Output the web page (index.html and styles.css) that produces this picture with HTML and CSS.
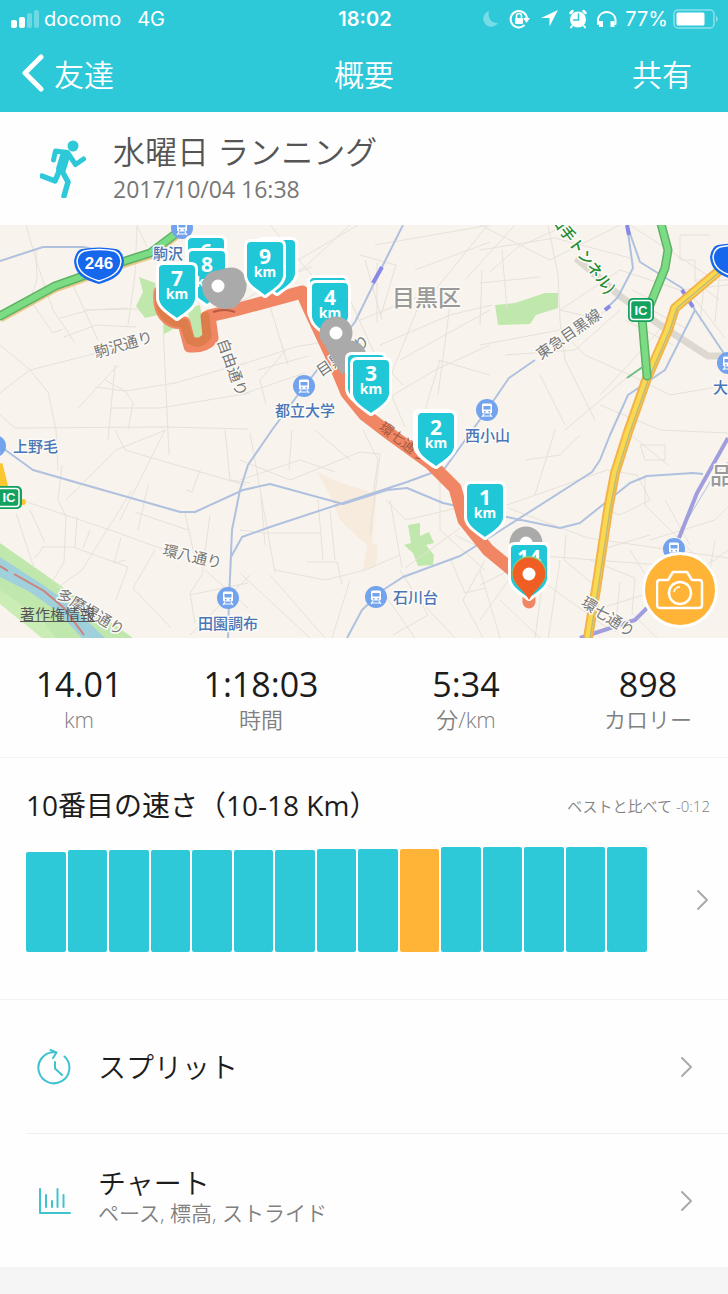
FILE: index.html
```html
<!DOCTYPE html>
<html lang="ja">
<head>
<meta charset="utf-8">
<meta name="viewport" content="width=device-width, initial-scale=1">
<title>概要</title>
<link rel="stylesheet" href="styles.css">
</head>
<body>
<header class="top">
  <div class="status">
    <div class="status-side">
      <svg class="signal" width="30" height="18" viewBox="0 0 30 18" fill="#fff"><rect x="1" y="10" width="6" height="8" rx="2"/><rect x="9" y="7" width="6" height="11" rx="2"/><rect x="17" y="3" width="5" height="15" rx="2" opacity=".3"/><rect x="24" y="0" width="5" height="18" rx="2" opacity=".3"/></svg>
      <span class="carrier">docomo</span>
      <span>4G</span>
    </div>
    <time class="clock">18:02</time>
    <div class="status-side status-right">
      <svg width="140" height="22" viewBox="480 7 140 22" fill="none" stroke="#fff" stroke-width="2" stroke-linecap="round">
        <path d="M488 10a8 8 0 1 0 9 12c-6 1-11-5-9-12z" fill="#fff" stroke="none" opacity=".35"/>
        <path d="M523 24.500a8.200 8.200 0 1 1 3-6.500"/><path d="M522 17h7l-3.500 5z" fill="#fff" stroke="none"/>
        <rect x="514" y="17" width="8" height="6" rx="1" fill="#fff" stroke="none"/><path d="M515.500 17v-2a2.500 2.500 0 0 1 5 0v2" stroke-width="1.500"/>
        <path d="M557 9l-17 8h8.500v8.500z" fill="#fff" stroke="none"/>
        <circle cx="577" cy="18.500" r="8" fill="#fff" stroke="none"/><path d="M569.500 12l2-2M582.500 10l2 2" stroke-width="2.500"/><path d="M571 25l-1 1.500M583 25l1 1.500"/><path d="M577.500 13v6h-5" stroke="#2dc9d9" stroke-width="1.500"/>
        <path d="M597 23v-5a9 9 0 0 1 17.500 0v5"/><path d="M600 20v6M611.500 20v6" stroke-width="4" stroke-linecap="butt"/>
      </svg>
      <span>77%</span>
      <svg width="48" height="20" viewBox="0 0 48 20"><rect x="2" y="1" width="40" height="18" rx="4" fill="none" stroke="#fff" stroke-width="1.500" opacity=".45"/><rect x="4.500" y="3.500" width="28" height="13" rx="1.500" fill="#fff"/><path d="M44 6.500q3.500 3.500 0 7z" fill="#fff" opacity=".45"/></svg>
    </div>
  </div>
  <nav class="nav">
    <button class="nav-button back" type="button"><svg width="24" height="38" viewBox="0 0 24 38" fill="none" stroke="#fff" stroke-width="5" stroke-linecap="round" stroke-linejoin="round"><path d="M21 3L5 19l16 16"/></svg>友達</button>
    <h1 class="nav-title">概要</h1>
    <button class="nav-button share" type="button">共有</button>
  </nav>
</header>

<main>
  <section class="activity">
    <svg width="46" height="58" viewBox="40 141 46 58" fill="none" stroke="#2dc9d9" stroke-linecap="round" stroke-linejoin="round"><circle cx="73" cy="147" r="5.500" fill="#2dc9d9" stroke="none"/><path d="M53.500 161l2-9 12 1.500 8 12 8-5.500" stroke-width="5"/><path d="M65 157l-4 13" stroke-width="10"/><path d="M60 170l-5 12-13-5M62 172l6 11-4 14" stroke-width="5.500"/></svg>
    <div>
      <h2 class="activity-name">水曜日 ランニング</h2>
      <p class="activity-date">2017/10/04 16:38</p>
    </div>
  </section>

  <section class="map" aria-label="コース">
    <svg class="map-canvas" viewBox="0 225 728 413">
      <defs>
        <path id="shield" d="M-14 -26H14Q18 -26 18 -22V8C17 16 8 21 0 27C-8 21 -17 16 -18 8V-22Q-18 -26 -14 -26Z"/>
        <g id="train"><circle r="11"/><path d="M-3.500 -6.500h7q1.500 0 1.500 1.500v7q0 1.500-1.500 1.500h-7q-1.500 0-1.500-1.500v-7q0-1.500 1.500-1.500z" fill="#fff"/><path d="M-3.500 -4h7v3.500h-7zM-3 1h1.500v1.500H-3zM1.500 1H3v1.500H1.500z"/><path d="M-3 4l-2 3M3 4l2 3M-4 6h8" stroke="#fff" stroke-width="1.200"/></g>
        <path id="drop" d="M0 26C-4 17 -16.500 10 -16.500 0A16.500 16.500 0 0 1 16.500 0C16.500 10 4 17 0 26Z"/>
      </defs>
      <rect y="225" width="728" height="413" fill="#f8f4ed"/>
      <g class="park">
        <path d="M139 277l16 6 3 32-13 3-9-12 7-14zM163 316l20 8-19 10zM187 308l13-3 5 32-12 4zM495 305l20-2 30-10h13v15l-22 7-6 9-32 1zM408 525l12-2v13l9-4 5 11-8 2 8 10-1 10-15 1-5-13-9-8 7-2zM0 543l50 35 83 60H0z"/>
      </g>
      <path d="M317 472l21 10 35 11 4-1-5 51 6 2-2 22-13 3 4-25-17-15-10-10-10-25z" fill="#f7ebdd"/>
      <path d="M0 590l40 27 16 21H0z" fill="#c9edb5"/><path d="M0 604l42 34H0z" fill="#f8f4ed"/>
      <path d="M0 557l40 26 27 19 38 36H82L58 612 30 592 0 577z" fill="#9fd0dc"/>
      <path d="M0 566l8 5M14 574l30 17 20 17 20 27" fill="none" stroke="#cf8179" stroke-width="2"/>
      <g class="road">
        <path d="M26 225l10 35 17 50 22 33M36 250l1 30-7 20 23 33 10-4M73 285l25 55M0 345l30 25 18 22 8 38 2 40M0 393l30-23 75-19 24-10M64 337l32-12 40 2M60 318l30-8 38-2M85 310l53-1M137 225l-2 50-7 50M115 365l-7 75M78 408l40-43M105 380l20 11 50-8 70-20M95 387l30 4 8 12-5 27M110 408h50l90-15M0 415l15 13 150-1 83 2M163 325l6 130M172 248l-2 60M137 225l10 22"/>
        <path d="M240 302l65-35 45-42M270 225l60 72M298 260l60-35M268 300l20 65M240 365l55-18 45-8M290 275l22-8M258 370l50-14M286 350l-26 30 6 25M240 395l65-22M350 300l25 55 28 30M365 260l17 60M360 255l36 10-15 50M377 263v60M360 320l75-30 57-70M380 345l70-30 42-10M400 360l90-50M385 400l50-30 55-25M375 245l115-20M415 270l75-28M417 310l-30 75 18 42M450 305l-12 90M438 360l52 15M482 270l-2 55M490 272l28-25 62-28M515 225l-50 55M440 360l-15 50"/>
        <path d="M480 250l75-12 75 20M480 283l60-6M502 250l5 60M548 225l10 50 2 45 5 40 30 60M480 225l70 35 80-40M560 310l60-40 60 20 48-5M560 310l35 8 14-10M505 355l70-5 45-40M540 375l25 50M480 345l80-15 25 25 45 20 40 20 58-10M600 395l30-32 40-45M565 430l65-55M600 405l60 25 68 3M680 235h30M680 235v25h15v20h33M632 290l25 12M633 300l52 28M625 320l48 25M690 293l35 45M694 280l25 20M705 277l-5 45M720 270l-5 52M630 225l85 55"/>
        <path d="M62 465l-4 35 8 17-2 45-12 20M66 500l50-50 50-20M16 513l18 55M27 502l83 28 50 18 25 3M30 510l15 33M77 517l-2 30M90 530l-7 18M42 547h30M35 558l8-11M73 547l55 20-12 33M121 538l-7 25 12-3M132 490l-50 80-25 18M165 430l-45 90M148 485l-10 45M65 480l122 33M135 512l53 18M200 470l-8 22-5-2M225 430l5 50 20 3M185 513l10 45M210 515l-8 60-12 18 5 30M155 550l-22 38 38 40M115 430l10 20 120 35M190 595l58-12M205 570l43 38M250 575l-60 60"/>
        <path d="M240 480l60-20 35 12M240 460l50 20 70-28 20 2-10 80M250 433l25 140M275 570l50 10 40-10 35-15M240 530l25 3h55M265 545l-4-50M318 500l5 60M330 510l5 50M307 562h30l5 22M270 575l55 63M240 573l70 65M363 430l15 30-5 35M292 430l-3 40M315 430l35 30M386 500l20 20 55-13 40 10M390 500l12 68M440 430v100l45 40M460 528l-55 40M350 580l-18 58M400 570l28 45-35 20M450 558l15 35 20-5M485 560l-22 40 20 38M385 595l30 43M410 590l45 48M455 535l60 30"/>
        <path d="M507 505l100-35 30 5 13 25-30 15-15-5M535 495l20-65M580 435l-20 20-35 5M640 445h25v15h-20zM625 430l43 35M508 508l80 30 140 20M566 535l-2 25 30 25M530 555l130 10M480 585l40-20 90 65M480 620l50-70M545 565l-10 73M560 560l-12 80M590 560l45 18-3 35 25 25M630 550l25 40 60-30 13-10M650 540l65-20 13-13M665 500l25 45M645 475v30l50 50M600 550l50-15M620 582l-5 50M595 610l80-25M480 570l20 68M715 540l-5 30M500 600l40 38"/>
      </g>
      <path d="M576 258l44 38 40 29 48 31h20" fill="none" stroke="#ddd8d0" stroke-width="7"/>
      <g class="rail">
        <path d="M0 261l43-14h40l40 8"/>
        <path d="M627 225l6 43-15 29-13 13M627 225l13 37 42 26 13 22 32 48M695 310l-30 60-37 25-18 40-10 25-8 12-105 67-27 17-57 21-20 13-21 20-15 28M535 360l-26 18-22 32-24 33-18 25-38 14-64 21-73 24-28 10-11 20-2 41M0 446l33 24 147 42h15l48-22 27-6 73 20 44-14 20-2 36 15 64 14 53 11 20-5 50-40 17-7 46-3 10 1M228 638l1-38 3-70 8-40 8-25 24-35 31-42 52-66 27-55 21-42"/>
        <path d="M728 462l-15 15-30 50" stroke-width="1"/>
      </g>
      <path d="M728 438l-31 55-18 45M647 608l-12 12-55 18" class="jr"/>
      <path d="M373 283l9-16M682 290l11 17M605 310l5-4M627 225l2 10" fill="none" stroke="#8888e8" stroke-width="4"/>
      <g fill="none" stroke-linejoin="round">
        <path d="M728 265l-8 5-45 38-7 22-21 48-19 54-13 41-7 37-11 73-9 55" stroke="#f3b34c" stroke-width="10"/>
        <path d="M728 265l-8 5-45 38-7 22-21 48-19 54-13 41-7 37-11 73-9 55" stroke="#fbd94f" stroke-width="6"/>
        <path d="M722 270l-45 38-7 22-21 48-19 54-13 41-7 37-11 73-9 55" stroke="#bdbc7c" stroke-width="1.500"/>
        <path d="M0 318l55-30 70-25 25-8 32-24" stroke="#e9c98a" stroke-width="9"/>
        <path d="M0 316l55-30 70-25 25-8 32-24M660 220l8 30-3 18-15 37-8 13 5 58" stroke="#5fb166" stroke-width="9" stroke-linecap="round"/>
        <path d="M0 316l55-30 70-25 25-8 32-24M660 220l8 30-3 18-15 37-8 13 5 58" stroke="#7bdc84" stroke-width="6" stroke-linecap="round"/>
        <path d="M644 366l-17 12" stroke="#72bd80" stroke-width="2"/>
        <path d="M-2 464l7 28" stroke="#fbc72f" stroke-width="9"/>
      </g>
      <circle cx="23" cy="502" r="3" fill="#fbc72f"/>
      <g fill="none" stroke="#f08664" stroke-width="13" stroke-linejoin="round" stroke-linecap="round">
        <path d="M160 292C158 312 167 324 184 323L190 346Q205 347 212 338L209 316 235 310 302 292 310 310 332 357 347 393 364 414 390 434 430 463 455 488 464 520 488 550 516 573 529 584V602"/>
        <path d="M160 292C158 312 167 324 184 323L190 340Q200 346 207 336L205 316" stroke="#dd7d4c" stroke-width="9"/>
      </g>
      <path d="M213 312q12-4 22 0" fill="none" stroke="#b65a42" stroke-width="2"/>
      <g class="road-name">
        <text x="96" y="358" transform="rotate(-16 96 358)">駒沢通り</text>
        <text x="217" y="341" transform="rotate(70 217 341)">自由通り</text>
        <text x="321" y="377" transform="rotate(-34 321 377)">目黒通り</text>
        <text x="162" y="555" transform="rotate(13 162 555)">環八通り</text>
        <text x="580" y="605" transform="rotate(33 580 605)">環七通り</text>
        <text x="56" y="597" transform="rotate(31 56 597)">多摩堤通り</text>
        <text x="541" y="360" transform="rotate(-35 541 360)">東急目黒線</text>
      </g>
      <text x="378" y="429" transform="rotate(37 378 429)" font-size="14" fill="#a75a42">環七通り</text>
      <text class="tunnel" x="550" y="219" transform="rotate(53 550 219)">山手トンネル)</text>
      <text class="ward" x="392" y="306">目黒区</text><text class="ward" x="710" y="484">品</text>
      <g fill="#73a3ed">
        <use href="#train" x="182" y="228"/><use href="#train" x="304" y="386"/><use href="#train" x="487" y="410"/><use href="#train" x="728" y="363"/><use href="#train" x="-5" y="446"/><use href="#train" x="228" y="598"/><use href="#train" x="376" y="597"/><use href="#train" x="674" y="549"/>
      </g>
      <g class="station">
        <text x="153" y="259">駒沢</text><text x="275" y="416">都立大学</text><text x="465" y="441">西小山</text><text x="13" y="452">上野毛</text><text x="198" y="629">田園調布</text><text x="393" y="603">石川台</text><text x="713" y="393">大</text>
      </g>
      <g id="route-246"><path d="M82 249Q99 246 116 249Q122 250 124 261C123 275 113 280 99 284C85 280 75 275 74 261Q76 250 82 249Z" fill="#1767ed"/><path d="M84 251Q99 248 114 251Q120 253 121 261C120 273 111 277 99 281C87 277 78 273 77 261Q78 253 84 251Z" fill="none" stroke="#fff" stroke-width="1.500"/></g>
      <text class="sign" x="99" y="269" font-size="17">246</text>
      <use href="#route-246" x="636" y="-4"/><text class="sign" x="733" y="266" font-size="17">1</text>
      <g fill="#12a15f"><rect x="628" y="298" width="26" height="24" rx="5"/><rect x="-5" y="486" width="27" height="23" rx="5"/></g>
      <g fill="none" stroke="#fff" stroke-width="1.500"><rect x="630.500" y="300.500" width="21" height="19" rx="3"/><rect x="-3" y="488.500" width="22" height="18" rx="3"/></g>
      <text class="sign" x="641" y="315" font-size="13">IC</text><text class="sign" x="9" y="502" font-size="13">IC</text>
      <g class="km-shields">
        <use href="#shield" x="206" y="264"/>
        <use href="#shield" x="277" y="266"/><use href="#shield" x="328" y="304"/><use href="#shield" x="434" y="438"/>
      </g>
      <g class="km"><text x="206" y="259" class="num">6</text></g>
      <g class="km-shields"><use href="#shield" x="207" y="277"/></g>
      <g class="km"><text x="207" y="272" class="num">8</text><text x="207" y="287">km</text></g>
      <path d="M202 287Q203 271 220 270Q235 264 243 273Q250 284 244 296L236 307Q224 311 217 307Q203 300 202 287Z" fill="#aaa"/><circle cx="218" cy="286" r="6.500" fill="#fff"/>
      <g class="km-shields"><use href="#shield" x="177" y="291"/><use href="#shield" x="265" y="268"/><use href="#shield" x="330" y="309"/><use href="#shield" x="485" y="510"/><use href="#shield" x="436" y="439"/></g>
      <g class="km">
        <text x="177" y="286" class="num">7</text><text x="177" y="299">km</text>
        <text x="265" y="264" class="num">9</text><text x="265" y="277">km</text>
        <text x="330" y="305" class="num">4</text><text x="330" y="318">km</text>
        <text x="436" y="435" class="num">2</text><text x="436" y="448">km</text>
        <text x="485" y="505" class="num">1</text><text x="485" y="518">km</text>
      </g>
      <g fill="#aaa"><circle cx="350" cy="357" r="16.500"/><path d="M320 338l22 37 20-23z"/><circle cx="336" cy="333" r="16.500"/><circle cx="526" cy="543" r="16.500"/></g><circle cx="336" cy="333" r="6.500" fill="#fff"/><circle cx="526" cy="543" r="6.500" fill="#fff"/>
      <g class="km-shields"><use href="#shield" x="366" y="381"/><use href="#shield" x="371" y="386"/><use href="#shield" x="529" y="571"/></g>
      <g class="km"><text x="371" y="381" class="num">3</text><text x="371" y="394">km</text><text x="529" y="565" class="num">14</text></g>
      <circle cx="529" cy="573" r="17" fill="#82d27c"/><use href="#drop" x="529" y="574" fill="#f15e24"/><circle cx="529" cy="574" r="6.500" fill="#fff"/>
    </svg>
    <a class="legal" href="#legal">著作権情報</a>
    <button class="camera" type="button" aria-label="写真を追加"><svg width="48" height="40" viewBox="0 0 48 40" fill="none" stroke="#fff" stroke-width="2.500" stroke-linejoin="round"><path d="M3 10h9l5-8h14l5 8h7q3 0 3 3v22q0 3-3 3H4q-3 0-3-3V13q0-3 3-3z"/><circle cx="24" cy="23" r="11"/><path d="M18 22q1-5 6-5" stroke-width="1.500"/></svg></button>
  </section>

  <dl class="stats">
    <div><dd>14.01</dd><dt>km</dt></div>
    <div><dd>1:18:03</dd><dt>時間</dt></div>
    <div><dd>5:34</dd><dt>分/km</dt></div>
    <div><dd>898</dd><dt>カロリー</dt></div>
  </dl>

  <section class="rank">
    <div class="rank-head"><h2><b>10</b>番目の速さ（<b>10-18 Km</b>）</h2><p>ベストと比べて -0:12</p></div>
    <a class="rank-body" href="#history" aria-label="履歴">
      <span class="bars">
        <span style="height:95%"></span><span style="height:97%"></span><span style="height:97%"></span><span style="height:97%"></span><span style="height:97%"></span><span style="height:97%"></span><span style="height:97%"></span><span style="height:98%"></span><span style="height:98%"></span><span class="current" style="height:98%"></span><span style="height:100%"></span><span style="height:100%"></span><span style="height:100%"></span><span style="height:100%"></span><span style="height:100%"></span>
      </span>
      <svg class="chevron" width="14" height="22" viewBox="0 0 14 22"><path d="M2 2l9 9-9 9"/></svg>
    </a>
  </section>

  <a class="row" href="#splits">
    <svg width="36" height="40" viewBox="35 1047 36 40" class="row-icon"><path d="M62.500 1056.500a15.500 15.500 0 1 1-10-4.200M48.500 1050l6 2.500-3.500 5.500M53 1062v6.500l7 6.500"/></svg>
    <span class="row-name">スプリット</span>
    <svg class="chevron" width="14" height="22" viewBox="0 0 14 22"><path d="M2 2l9 9-9 9"/></svg>
  </a>
  <a class="row" href="#charts">
    <svg width="36" height="30" viewBox="37 1185 36 30" class="row-icon"><path d="M40 1188v24h30M46 1194v12M52 1200v6M57.500 1188v18M63.500 1194v12"/></svg>
    <span class="row-text"><span class="row-name">チャート</span><span class="row-note">ペース, 標高, ストライド</span></span>
    <svg class="chevron" width="14" height="22" viewBox="0 0 14 22"><path d="M2 2l9 9-9 9"/></svg>
  </a>
</main>
</body>
</html>
```
FILE: styles.css
```css
* { box-sizing: border-box; }
body {
  margin: 0;
  background: #f5f5f5;
  color: #1c1c1c;
  font-family: "Open Sans", "Noto Sans CJK JP", sans-serif;
  font-weight: 350;
}
h1, h2, p, dl, dd { margin: 0; font-weight: inherit; }
button { border: 0; padding: 0; background: none; color: inherit; font: inherit; cursor: pointer; }
a { color: inherit; text-decoration: none; }
svg { flex: none; display: block; }
main { background: #fefefe; }

.top { background: #2dc9d9; color: #fff; }
.status, .nav {
  display: grid;
  grid-template-columns: 1fr auto 1fr;
  align-items: center;
}
.status {
  height: 37px;
  padding: 0 8px 0 10px;
  font-family: Inter, sans-serif;
  font-size: 20px;
  font-weight: 400;
}
.status-side { display: flex; align-items: center; gap: 4px; }
.carrier { margin-right: 12px; }
.status-right { justify-content: flex-end; }
.clock { font-weight: 600; }
.nav { height: 75px; padding: 0 20px 4px; font-size: 30px; }
.nav-title { font-size: 30px; }
.nav-button { display: flex; align-items: center; gap: 10px; }
.share { justify-self: end; margin-right: 16px; }

.activity { display: flex; align-items: center; gap: 27px; height: 113px; padding: 0 40px; }
.activity-name { color: #555; font-size: 32px; line-height: 40px; }
.activity-date { color: #777; font-size: 23px; font-weight: 400; line-height: 34px; }

.map { position: relative; }
.map-canvas { width: 100%; height: auto; overflow: hidden; font-family: "Noto Sans CJK JP", sans-serif; font-weight: 400; }
.park { fill: #c0e8ad; }
.road { fill: none; stroke: #e6e1d9; stroke-width: 1; }
.rail { fill: none; stroke: #afc1df; stroke-width: 2; stroke-linejoin: round; }
.jr { fill: none; stroke: #a09edd; stroke-width: 4; }
.road-name, .station, .tunnel, .ward { stroke: #fcfaf6; stroke-width: 3; paint-order: stroke; stroke-linejoin: round; }
.road-name { fill: #777; font-size: 15px; }
.station { fill: #4876b6; font-size: 15px; font-weight: 500; }
.tunnel { fill: #218c31; font-size: 15px; font-weight: 500; }
.ward { fill: #999; font-size: 23px; font-weight: 500; }
.sign { fill: #fff; font-family: "Liberation Sans", sans-serif; font-weight: 700; text-anchor: middle; }
.km-shields { fill: #20c8d7; stroke: #fff; stroke-width: 6; paint-order: stroke; stroke-linejoin: round; }
.km { fill: #fff; font-family: "Noto Sans", sans-serif; font-size: 14px; font-weight: 700; text-anchor: middle; }
.num { font-size: 21px; }
.legal { position: absolute; left: 20px; bottom: 14px; color: #555; font-size: 15px; font-weight: 400; line-height: 20px; text-decoration: underline; }
.camera {
  position: absolute;
  right: 10px;
  bottom: 10px;
  display: grid;
  place-items: center;
  width: 76px;
  height: 76px;
  border: 3px solid #fff;
  border-radius: 50%;
  background: #ffb437;
}

.stats {
  display: grid;
  grid-template-columns: 79fr 103fr 102fr 80fr;
  height: 120px;
  padding-top: 24px;
  border-bottom: 1px solid #f2f2f2;
  text-align: center;
}
.stats > div { display: flex; flex-direction: column; }
.stats dd { font-size: 34px; font-weight: 500; line-height: 44px; }
.stats dt { color: #808080; font-size: 22px; line-height: 26px; }

.rank { height: 242px; padding: 26px 18px 0 26px; border-bottom: 1px solid #f2f2f2; }
.rank-head { display: flex; justify-content: space-between; align-items: center; }
.rank-head h2 { font-size: 28px; font-weight: 400; line-height: 42px; }
.rank-head b { font-weight: 500; }
.rank-head p { color: #808080; font-size: 15px; }
.rank-body { display: flex; align-items: center; justify-content: space-between; gap: 49px; margin-top: 21px; }
.bars { display: flex; flex: 1; align-items: flex-end; gap: 2px; height: 105px; }
.bars span { flex: 1; border-radius: 2px; background: #2dc9d9; }
.bars .current { background: #ffb437; }
.chevron { fill: none; stroke: #aaa; stroke-width: 2; stroke-linecap: round; stroke-linejoin: round; }

.row { display: flex; align-items: center; gap: 25px; height: 133px; padding-right: 34px; margin-left: 26px; padding-left: 11px; }
.row + .row { height: 134px; border-top: 1px solid #f0f0f0; }
.row .chevron { margin-left: auto; }
.row-icon { fill: none; stroke: #3fc3d0; stroke-width: 2; stroke-linecap: round; stroke-linejoin: round; }
.row-text { display: flex; flex-direction: column; padding-bottom: 8px; }
.row-name { font-size: 28px; line-height: 32px; }
.row-note { color: #808080; font-size: 21px; line-height: 28px; }
```
